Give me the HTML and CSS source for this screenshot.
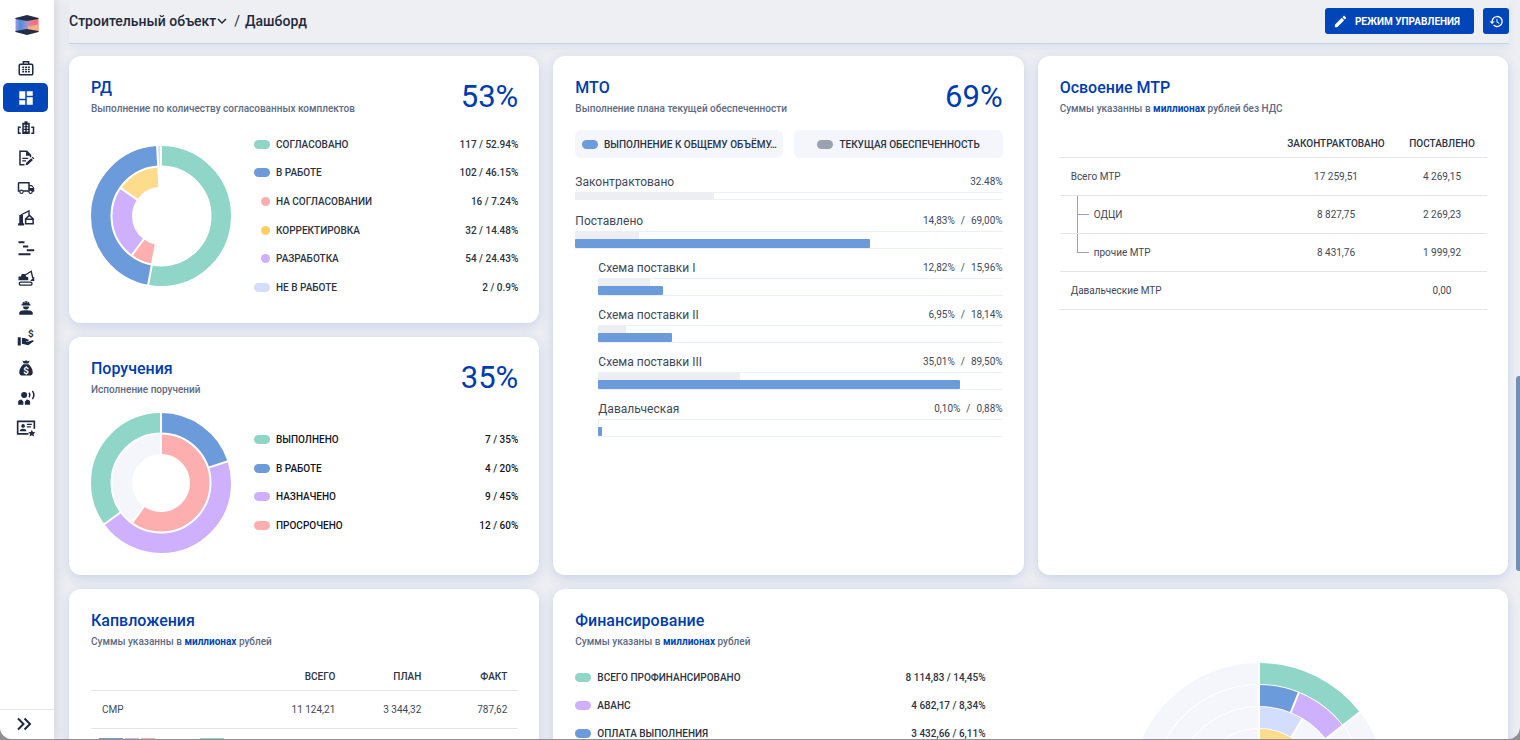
FILE: index.html
```html
<!DOCTYPE html>
<html lang="ru">
<head>
<meta charset="utf-8">
<title>Дашборд</title>
<link rel="stylesheet" href="styles.css">
</head>
<body>
<div class="app">
  <aside class="sidebar">
    <a class="logo" href="#" aria-label="Главная">
      <svg viewBox="0 0 24 20" width="24" height="20">
        <defs>
          <linearGradient id="lg-a" x1="0" x2="1"><stop offset="0" stop-color="#a59be0"/><stop offset=".4" stop-color="#4a8fe0"/><stop offset="1" stop-color="#a58fd0"/></linearGradient>
          <linearGradient id="lg-b" x1="0" x2="1"><stop offset="0" stop-color="#b58fc8"/><stop offset=".6" stop-color="#ff6f7d"/><stop offset="1" stop-color="#ff6f7d"/></linearGradient>
        </defs>
        <path d="M0.500 3.500L12 5.500V15L0.500 16.500Z" fill="url(#lg-a)"/>
        <path d="M23.500 3.500L12 5.500V15L23.500 16.500Z" fill="url(#lg-b)"/>
        <path d="M23.500 9.500L13 11.500V15.500L23.500 16.500Z" fill="#f9ae8c"/>
        <path d="M0.500 3L12 0 23.500 3V4L12 6 .5 4Z" fill="#222d42"/>
        <path d="M0.500 16L12 14 23.500 16V17L12 20 .5 17Z" fill="#222d42"/>
      </svg>
    </a>
    <nav class="nav">
      <a class="nav-item" href="#" aria-label="Портфель"><svg class="icon" viewBox="0 0 24 24"><rect x="3" y="7" width="18" height="14" rx="1.500" fill="none" stroke="currentColor" stroke-width="2"/><path d="M8.500 7V3.500H15.500V7" fill="none" stroke="currentColor" stroke-width="2"/><path d="M7 10h2.500v2H7zM10.800 10h2.500v2h-2.500zM14.500 10H17v2h-2.500zM7 13h2.500v2H7zM10.800 13h2.500v2h-2.500zM14.500 13H17v2h-2.500zM7 16h2.500v2H7zM10.800 16h2.500v2h-2.500zM14.500 16H17v2h-2.500z"/></svg></a>
      <a class="nav-item nav-item--active" href="#" aria-label="Дашборд" aria-current="page"><svg class="icon" viewBox="0 0 24 24"><path d="M13 9V3h8v6zM13 21V11h8v10zM3 21v-6h8v6zM3 13V3h8v10z"/></svg></a>
      <a class="nav-item" href="#" aria-label="Объекты"><svg class="icon" viewBox="0 0 24 24"><path fill-rule="evenodd" d="M10 3h4v2h3v15H7V5h3zM9 7.500v2h2v-2zm4 0v2h2v-2zM9 11v2h2v-2zm4 0v2h2v-2zM9 14.500v2h2v-2zm4 0v2h2v-2z"/><path d="M5 11H2v8h3M19 11H22v8h-3" fill="none" stroke="currentColor" stroke-width="2"/></svg></a>
      <a class="nav-item" href="#" aria-label="Документы"><svg class="icon" viewBox="0 0 24 24"><path d="M10 21H4V3h9l5 5v3" fill="none" stroke="currentColor" stroke-width="2"/><path d="M12 2.500V9h6.500zM7 11.500h8v1.800H7zM7 15h5v1.800H7zM11.500 21.500l.6-2.800 6.800-6.500 2.300 2.300-6.800 6.500zM19.700 11.500l1.200-1.100 2.300 2.300-1.200 1.100z"/></svg></a>
      <a class="nav-item" href="#" aria-label="Поставки"><svg class="icon" viewBox="0 0 24 24"><path d="M18 18.500a1.500 1.500 0 1 0 0-3 1.500 1.500 0 0 0 0 3M19.500 9.500H17V12h4.460L19.500 9.500M6 18.500a1.500 1.500 0 1 0 0-3 1.500 1.500 0 0 0 0 3M20 8l3 4v5h-2a3 3 0 0 1-6 0H9a3 3 0 0 1-6 0H1V6c0-1.110.89-2 2-2h14v4h3M3 6v9h.76C4.310 14.390 5.110 14 6 14s1.690.39 2.240 1H15V6H3Z"/></svg></a>
      <a class="nav-item" href="#" aria-label="Строительство"><svg class="icon" viewBox="0 0 24 24"><path d="M3 8h5v11h1.500v3H1.500v-3H3z"/><path d="M5 8L16 2.500V8" fill="none" stroke="currentColor" stroke-width="1.800"/><path d="M10.500 14L16.500 8.500 22.500 14M11.500 13.500H21.500V19.500H11.500Z" fill="none" stroke="currentColor" stroke-width="2"/></svg></a>
      <a class="nav-item" href="#" aria-label="График"><svg class="icon" viewBox="0 0 24 24"><path d="M2 3h8v2.800H2zM8 8.500h7v2.800H8zM13 13.500h10v2.800H13zM2 19h16v2.800H2z"/></svg></a>
      <a class="nav-item" href="#" aria-label="Техника"><svg class="icon" viewBox="0 0 24 24"><path d="M2 10h3l1.500-3.500H11L12 10l3 1v4H2z"/><path d="M11 8l8-5 2 9" fill="none" stroke="currentColor" stroke-width="1.800"/><path d="M23 10v6H17.500z"/><rect x="3" y="17.500" width="17" height="4" rx="2" fill="none" stroke="currentColor" stroke-width="1.800"/></svg></a>
      <a class="nav-item" href="#" aria-label="Рабочие"><svg class="icon" viewBox="0 0 24 24"><path d="M7 7a5 4.500 0 0 1 3-4v2h1V2.500h2V5h1V3a5 4.500 0 0 1 3 4h1v1.700H6V7zM8 10h8a4 4 0 0 1-8 0zM3 21v-2.500c0-2.500 4-3.500 9-3.500s9 1 9 3.500V21z"/></svg></a>
      <a class="nav-item" href="#" aria-label="Выплаты"><svg class="icon" viewBox="0 0 24 24"><path d="M1 11h4v11H1zM6.500 12H10l5 2c1 .4 1 2-.5 2H12v.8h3.500l5-1.800c1.600-.6 2.500.8 1.300 1.800L15 21.500 6.500 19.500z"/><text class="icon-sign" x="18.500" y="11" font-size="13">$</text></svg></a>
      <a class="nav-item" href="#" aria-label="Финансы"><svg class="icon" viewBox="0 0 24 24"><path d="M7 2l2.500 1L12 1.500 14.500 3 17 2l-2 4H9zM8.500 7h7C18 9 21 13.500 21 17.500c0 3-1.500 4.500-4.500 4.500h-9C4.500 22 3 20.500 3 17.500 3 13.500 6 9 8.500 7z"/><text class="icon-sign icon-sign--light" x="12" y="19.500" font-size="13">$</text></svg></a>
      <a class="nav-item" href="#" aria-label="Поручения"><svg class="icon" viewBox="0 0 24 24"><circle cx="9.500" cy="8" r="4"/><path d="M1.500 21v-3.500C1.500 15.500 3.500 14 6 14L8.500 17v4zM17.500 21v-3.500c0-2-2-3.500-4.500-3.500L10.500 17v4z"/><path d="M16 5q2 3 0 6M20.500 2.500q4 5.500 0 11" fill="none" stroke="currentColor" stroke-width="2"/></svg></a>
      <a class="nav-item" href="#" aria-label="Контакты"><svg class="icon icon--wide" viewBox="0 0 24 24"><path d="M15 19H2V4H22V13" fill="none" stroke="currentColor" stroke-width="2"/><circle cx="8.500" cy="9.500" r="2.200"/><path d="M4.500 16c0-2 2-3 4-3s4 1 4 3zM13 7h6v1.500h-6zM13 10h5v1.500h-5z"/><path d="M19 14l1.300 2.700 3 .4-2.200 2 .6 3L19 20.700l-2.700 1.400.6-3-2.200-2 3-.4z"/></svg></a>
    </nav>
    <button class="expand" type="button" aria-label="Развернуть меню"><svg width="18" height="18" viewBox="0 0 18 18"><path d="M3 3.500L8.500 9 3 14.500M9.500 3.500L15 9l-5.500 5.500" fill="none" stroke="currentColor" stroke-width="2"/></svg></button>
  </aside>

  <main class="main">
    <header class="topbar">
      <nav class="crumbs">
        <button class="crumb-menu" type="button">Строительный объект
          <svg width="10" height="10" viewBox="0 0 10 10"><path d="M1 3l4 4 4-4" fill="none" stroke="currentColor" stroke-width="1.500"/></svg>
        </button>
        <span class="crumb-sep">/</span>
        <a class="crumb" href="#">Дашборд</a>
      </nav>
      <div class="actions">
        <button class="btn" type="button"><svg width="15" height="15" viewBox="0 0 24 24"><path d="M20.710 7.040c.39-.39.39-1.040 0-1.410l-2.340-2.340c-.37-.39-1.020-.39-1.410 0l-1.840 1.830 3.750 3.750M3 17.250V21h3.750L17.810 9.930l-3.750-3.750L3 17.250Z"/></svg>РЕЖИМ УПРАВЛЕНИЯ</button>
        <button class="btn btn--icon" type="button" aria-label="История"><svg width="15" height="15" viewBox="0 0 24 24"><path d="M13.500 8H12v5l4.280 2.540.72-1.210-3.500-2.080V8M13 3a9 9 0 0 0-9 9H1l3.960 4.030L9 12H6a7 7 0 1 1 7 7c-1.930 0-3.680-.79-4.940-2.060l-1.420 1.420A9 9 0 1 0 13 3"/></svg></button>
      </div>
    </header>

    <div class="board">
      <section class="card">
        <div class="card-head">
          <div><h2 class="title">РД</h2><p class="subtitle">Выполнение по количеству согласованных комплектов</p></div>
          <div class="percent">53%</div>
        </div>
        <div class="split">
          <svg class="donut" viewBox="-70 -70 140 140">
            <g class="ring" transform="rotate(-90)">
              <circle class="s-green" r="60" pathLength="100" stroke-dasharray="52.940 100"/>
              <circle class="s-blue" r="60" pathLength="100" stroke-dasharray="46.150 100" stroke-dashoffset="-52.940"/>
              <circle class="s-pale" r="60" pathLength="100" stroke-dasharray="0.900 100" stroke-dashoffset="-99.100"/>
              <circle class="s-red" r="39" pathLength="100" stroke-dasharray="7.240 100" stroke-dashoffset="-52.940"/>
              <circle class="s-violet" r="39" pathLength="100" stroke-dasharray="24.430 100" stroke-dashoffset="-60.180"/>
              <circle class="s-yellow" r="39" pathLength="100" stroke-dasharray="14.480 100" stroke-dashoffset="-84.610"/>
            </g>
            <circle class="cut" r="49.500"/>
            <g class="cut"><path d="M0-28V-71"/><path d="M0-28V-71" transform="rotate(190.600)"/><path d="M0-28V-71" transform="rotate(-3.200)"/><path d="M0-28V-50" transform="rotate(216.600)"/><path d="M0-28V-50" transform="rotate(304.600)"/></g>
          </svg>
          <ul class="legend legend--six">
            <li><i class="chip b-green"></i><span>СОГЛАСОВАНО</span><b>117 / 52.94%</b></li>
            <li><i class="chip b-blue"></i><span>В РАБОТЕ</span><b>102 / 46.15%</b></li>
            <li><i class="chip chip--dot b-red"></i><span>НА СОГЛАСОВАНИИ</span><b>16 / 7.24%</b></li>
            <li><i class="chip chip--dot b-amber"></i><span>КОРРЕКТИРОВКА</span><b>32 / 14.48%</b></li>
            <li><i class="chip chip--dot b-violet"></i><span>РАЗРАБОТКА</span><b>54 / 24.43%</b></li>
            <li><i class="chip b-pale"></i><span>НЕ В РАБОТЕ</span><b>2 / 0.9%</b></li>
          </ul>
        </div>
      </section>

      <section class="card card--tall">
        <div class="card-head">
          <div><h2 class="title">МТО</h2><p class="subtitle">Выполнение плана текущей обеспеченности</p></div>
          <div class="percent">69%</div>
        </div>
        <div class="tabs">
          <button class="tab" type="button"><i class="chip b-blue"></i><span>ВЫПОЛНЕНИЕ К ОБЩЕМУ ОБЪЁМУ…</span></button>
          <button class="tab" type="button"><i class="chip b-gray"></i><span>ТЕКУЩАЯ ОБЕСПЕЧЕННОСТЬ</span></button>
        </div>
        <div class="meters">
          <div class="meter meter--single"><div class="meter-head"><span>Законтрактовано</span><b>32.48%</b></div><div class="track"><div class="bar" style="width:32.48%"></div></div></div>
          <div class="meter"><div class="meter-head"><span>Поставлено</span><b>14,83%<i>/</i>69,00%</b></div><div class="track"><div class="bar" style="width:14.83%"></div><div class="bar bar--fact" style="width:69%"></div></div></div>
          <div class="meter meter--sub"><div class="meter-head"><span>Схема поставки I</span><b>12,82%<i>/</i>15,96%</b></div><div class="track"><div class="bar" style="width:12.82%"></div><div class="bar bar--fact" style="width:15.96%"></div></div></div>
          <div class="meter meter--sub"><div class="meter-head"><span>Схема поставки II</span><b>6,95%<i>/</i>18,14%</b></div><div class="track"><div class="bar" style="width:6.95%"></div><div class="bar bar--fact" style="width:18.14%"></div></div></div>
          <div class="meter meter--sub"><div class="meter-head"><span>Схема поставки III</span><b>35,01%<i>/</i>89,50%</b></div><div class="track"><div class="bar" style="width:35.01%"></div><div class="bar bar--fact" style="width:89.5%"></div></div></div>
          <div class="meter meter--sub"><div class="meter-head"><span>Давальческая</span><b>0,10%<i>/</i>0,88%</b></div><div class="track"><div class="bar" style="width:0.1%"></div><div class="bar bar--fact" style="width:0.88%"></div></div></div>
        </div>
      </section>

      <section class="card card--tall">
        <div class="card-head">
          <div><h2 class="title">Освоение МТР</h2><p class="subtitle">Суммы указанны в <strong>миллионах</strong> рублей без НДС</p></div>
        </div>
        <table class="table table--center">
          <thead><tr><th></th><th class="col-wide">ЗАКОНТРАКТОВАНО</th><th class="col-mid">ПОСТАВЛЕНО</th></tr></thead>
          <tbody>
            <tr><td>Всего МТР</td><td>17 259,51</td><td>4 269,15</td></tr>
            <tr><td class="branch">ОДЦИ</td><td>8 827,75</td><td>2 269,23</td></tr>
            <tr><td class="branch branch--last">прочие МТР</td><td>8 431,76</td><td>1 999,92</td></tr>
            <tr><td>Давальческие МТР</td><td></td><td>0,00</td></tr>
          </tbody>
        </table>
      </section>

      <section class="card">
        <div class="card-head">
          <div><h2 class="title">Поручения</h2><p class="subtitle">Исполнение поручений</p></div>
          <div class="percent">35%</div>
        </div>
        <div class="split">
          <svg class="donut" viewBox="-70 -70 140 140">
            <g class="ring" transform="rotate(-90)">
              <circle class="s-blue" r="60" pathLength="100" stroke-dasharray="20 100"/>
              <circle class="s-violet" r="60" pathLength="100" stroke-dasharray="45 100" stroke-dashoffset="-20"/>
              <circle class="s-green" r="60" pathLength="100" stroke-dasharray="35 100" stroke-dashoffset="-65"/>
              <circle class="s-red" r="39" pathLength="100" stroke-dasharray="60 100"/>
              <circle class="s-light" r="39" pathLength="100" stroke-dasharray="40 100" stroke-dashoffset="-60"/>
            </g>
            <circle class="cut" r="49.500"/>
            <g class="cut"><path d="M0-28V-71"/><path d="M0-49V-71" transform="rotate(72)"/><path d="M0-49V-71" transform="rotate(234)"/><path d="M0-28V-50" transform="rotate(216)"/></g>
          </svg>
          <ul class="legend legend--four legend--dark">
            <li><i class="chip b-green"></i><span>ВЫПОЛНЕНО</span><b>7 / 35%</b></li>
            <li><i class="chip b-blue"></i><span>В РАБОТЕ</span><b>4 / 20%</b></li>
            <li><i class="chip b-violet"></i><span>НАЗНАЧЕНО</span><b>9 / 45%</b></li>
            <li><i class="chip b-red"></i><span>ПРОСРОЧЕНО</span><b>12 / 60%</b></li>
          </ul>
        </div>
      </section>

      <section class="card">
        <div class="card-head">
          <div><h2 class="title">Капвложения</h2><p class="subtitle">Суммы указанны в <strong>миллионах</strong> рублей</p></div>
        </div>
        <table class="table table--right">
          <thead><tr><th></th><th>ВСЕГО</th><th class="col-mid">ПЛАН</th><th class="col-mid">ФАКТ</th></tr></thead>
          <tbody><tr><td>СМР</td><td>11 124,21</td><td>3 344,32</td><td>787,62</td></tr></tbody>
        </table>
        <div class="stack"><i class="b-blue"></i><i class="b-violet stack-short"></i><i class="b-red stack-short"></i><i class="b-green stack-apart"></i></div>
      </section>

      <section class="card card--double">
        <div class="card-head">
          <div><h2 class="title">Финансирование</h2><p class="subtitle">Суммы указаны в <strong>миллионах</strong> рублей</p></div>
        </div>
        <div class="finance">
          <ul class="legend">
            <li><i class="chip b-green"></i><span>ВСЕГО ПРОФИНАНСИРОВАНО</span><b>8 114,83 / 14,45%</b></li>
            <li><i class="chip b-violet"></i><span>АВАНС</span><b>4 682,17 / 8,34%</b></li>
            <li><i class="chip b-blue"></i><span>ОПЛАТА ВЫПОЛНЕНИЯ</span><b>3 432,66 / 6,11%</b></li>
          </ul>
          <svg class="rings" viewBox="-128 -128 256 256">
            <g class="ring ring--thick" transform="rotate(-90)">
              <circle class="s-light" r="117.500"/><circle class="s-light" r="95.500"/><circle class="s-light" r="73.500"/><circle class="s-light" r="51.500"/>
              <circle class="s-green" r="117.500" pathLength="100" stroke-dasharray="14.450 100"/>
              <circle class="s-blue" r="95.500" pathLength="100" stroke-dasharray="6.110 100"/>
              <circle class="s-violet" r="95.500" pathLength="100" stroke-dasharray="8.340 100" stroke-dashoffset="-6.110"/>
              <circle class="s-pale" r="73.500" pathLength="100" stroke-dasharray="8.600 100"/>
              <circle class="s-yellow" r="51.500" pathLength="100" stroke-dasharray="20 100"/>
            </g>
            <g class="cut"><path d="M0-40V-129"/><path d="M0-84V-129" transform="rotate(52)"/><path d="M0-84V-107" transform="rotate(22)"/><path d="M0-62V-85" transform="rotate(31)"/></g>
          </svg>
        </div>
      </section>
    </div>
    <div class="scroll-thumb"></div>
  </main>
</div>
</body>
</html>
```
FILE: styles.css
```css
* { box-sizing: border-box; }

body {
  margin: 0;
  height: 100vh;
  overflow: hidden;
  background: #8f9094;
  font-family: Roboto, "Liberation Sans", sans-serif;
  font-size: 10px;
  color: #2b3445;
}

h2, p, ul { margin: 0; padding: 0; }
ul { list-style: none; }
button { font: inherit; color: inherit; border: 0; padding: 0; background: none; cursor: pointer; }
a { color: inherit; text-decoration: none; }
svg { display: block; fill: currentColor; }

.app {
  display: flex;
  height: calc(100vh - 1px);
  overflow: hidden;
  background: #eeeff3;
  border-radius: 0 0 12px 12px;
}

/* Sidebar */
.sidebar {
  position: relative;
  z-index: 3;
  display: flex;
  flex-direction: column;
  flex: none;
  width: 54px;
  background: #fff;
  box-shadow: 0 0 10px 2px rgba(60, 75, 110, .16);
  color: #1e2a41;
}
.logo { display: flex; justify-content: center; padding: 15px 1px 18px 0; }
.nav { flex: 1; }
.nav-item {
  display: flex;
  align-items: center;
  justify-content: center;
  height: 29px;
  margin: 0 6px 1px 3px;
  border-radius: 5px;
}
.nav-item--active { background: #0046b8; color: #fff; }
.icon { width: 18px; height: 18px; }
.icon--wide { width: 20px; height: 20px; }
.icon-sign { font-weight: 700; text-anchor: middle; }
.icon-sign--light { fill: #fff; }
.expand {
  display: flex;
  align-items: center;
  height: 30px;
  padding: 0 0 2px 15px;
  border-top: 1px solid #e3e4e8;
}

/* Top bar */
.main { position: relative; display: flex; flex-direction: column; flex: 1; min-width: 0; }
.topbar {
  position: relative;
  z-index: 2;
  display: flex;
  justify-content: space-between;
  align-items: center;
  flex: none;
  height: 44px;
  margin: 0 11px 0 15px;
  padding-bottom: 1px;
  border-bottom: 1px solid #c3d1ea;
  background: #eeeff3;
  box-shadow: 0 4px 8px rgba(160, 180, 220, .22);
}
.crumbs { display: flex; align-items: center; font-size: 14px; font-weight: 500; color: #1f2a3d; }
.crumb-menu { display: flex; align-items: center; gap: 1px; }
.crumb-sep { margin: 0 5px 0 7px; font-weight: 400; }
.actions { display: flex; gap: 9px; }
.btn {
  display: flex;
  align-items: center;
  gap: 7px;
  height: 26px;
  padding: 0 14px 0 8px;
  border-radius: 3px;
  background: #0046b8;
  color: #fff;
  font-weight: 700;
}
.btn--icon { width: 26px; padding: 0; justify-content: center; }

/* Board */
.board {
  display: grid;
  grid-template-columns: repeat(3, minmax(0, 1fr));
  gap: 14px;
  flex: 1;
  align-content: start;
  min-height: 0;
  overflow: hidden;
  padding: 12px 12px 0 15px;
}
.card {
  padding: 20px 21px 21px 22px;
  border-radius: 12px;
  background: #fff;
  box-shadow: 0 3px 12px rgba(160, 182, 222, .5);
}
.card--tall { grid-row: span 2; }
.card--double { grid-column: span 2; }
.card:nth-child(2) { grid-column: 2; grid-row: 1 / 3; }
.card:nth-child(3) { grid-column: 3; grid-row: 1 / 3; }
.card-head { display: flex; justify-content: space-between; height: 41px; margin-bottom: 13px; }
.title { font-size: 16px; line-height: 24px; font-weight: 500; color: #003cb0; }
.subtitle { font-size: 10px; line-height: 17px; font-weight: 500; color: #5d6b85; }
.subtitle strong { font-weight: 700; color: #0046b8; }
.percent { font-size: 31px; line-height: 41px; color: #003cb0; }

.split { display: flex; align-items: center; gap: 23px; min-height: 143px; }
.donut { flex: none; width: 140px; height: 140px; }
.ring circle { fill: none; stroke-width: 20; }
.ring--thick circle { stroke-width: 21; }
.cut { fill: none; stroke: #fff; stroke-width: 2; }

.legend { display: grid; grid-auto-rows: 28px; flex: 1; font-weight: 500; }
.legend--six { height: 172px; grid-auto-rows: 1fr; }
.legend--four { height: 115px; grid-auto-rows: 1fr; }
.legend--dark { color: #12161f; }
.legend li { display: flex; align-items: center; gap: 6px; }
.legend b { margin-left: auto; font-weight: 500; }
.chip { flex: none; width: 16px; height: 9px; border-radius: 5px; }
.chip--dot { width: 9px; margin-left: 7px; }

.s-green { stroke: #8fd5c8; } .b-green { background: #8fd5c8; }
.s-blue { stroke: #6c9bdc; } .b-blue { background: #6c9bdc; }
.s-red { stroke: #fdaeae; } .b-red { background: #fdaeae; }
.s-violet { stroke: #cfb0ff; } .b-violet { background: #cfb0ff; }
.s-pale { stroke: #d3deff; } .b-pale { background: #d3deff; }
.s-yellow { stroke: #ffdc8c; } .b-amber { background: #ffd060; }
.s-light { stroke: #f5f6fb; } .b-gray { background: #9aa2b0; }

/* Supply meters */
.tabs { display: grid; grid-template-columns: 1fr 1fr; gap: 11px; margin-bottom: 14px; }
.tab {
  display: flex;
  align-items: center;
  justify-content: center;
  gap: 6px;
  min-width: 0;
  height: 28px;
  padding: 0 4px;
  border-radius: 6px;
  background: #f5f6fb;
  font-weight: 500;
}
.tab span { white-space: nowrap; }
.meter { margin-bottom: 9px; }
.meter--single { margin-bottom: 11px; }
.meter--sub { margin-left: 23px; }
.meter-head { display: flex; justify-content: space-between; line-height: 20px; color: #40495a; }
.meter-head span { font-size: 12px; }
.meter-head b { font-weight: 400; }
.meter-head i { margin: 0 6px; font-style: normal; }
.track { height: 18px; border: 1px solid #ebeefb; border-width: 1px 0; }
.meter--single .track { height: 8px; }
.bar { height: 7px; background: #edeef2; }
.bar--fact { height: 9px; border-radius: 1px; background: #6c9bdc; }

/* Tables */
.table { width: 100%; border-collapse: collapse; table-layout: fixed; color: #40495a; }
.table th, .table td { padding: 0 11px; border-bottom: 1px solid #e4e5e9; font-weight: 400; white-space: nowrap; }
.table th { height: 27px; font-weight: 500; color: #2b3445; }
.table td { height: 38px; }
.table td:first-child { text-align: left; }
.table--center th, .table--center td { text-align: center; }
.table--right th, .table--right td { text-align: right; }
.table .col-wide { width: 122px; }
.table .col-mid { width: 86px; }
.table--center .col-mid { width: 90px; }
.table .branch { position: relative; padding-left: 34px; }
.branch::before, .branch::after { content: ""; position: absolute; left: 17px; background: #8fa6c8; }
.branch::before { top: 0; width: 1px; height: 100%; }
.branch::after { top: 50%; width: 12px; height: 1px; }
.branch--last::before { height: 50%; }
.stack { display: flex; gap: 2px; margin: 9px 8px; }
.stack i { width: 24px; height: 9px; }
.stack .stack-short { width: 14px; }
.stack .stack-apart { margin-left: 43px; }

.finance { display: grid; grid-template-columns: 45% 1fr; column-gap: 5%; align-items: start; }
.rings { width: 256px; height: 256px; justify-self: center; }

.scroll-thumb {
  position: absolute;
  z-index: 4;
  right: 0;
  top: 376px;
  width: 4px;
  height: 195px;
  border-radius: 3px 0 0 3px;
  background: #7190b8;
}
```
